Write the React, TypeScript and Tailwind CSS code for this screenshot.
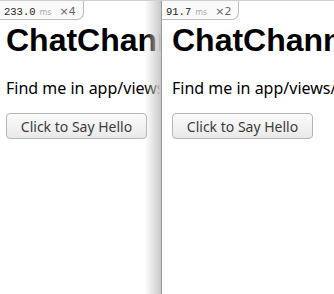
import React from "react";

function Badge({ ms, count }: { ms: string; count: string }) {
  return (
    <div className="flex h-[19px] items-end self-start rounded-br-[7px] border-b border-r border-[#bdbdbd] bg-[#fafafa] pb-[2px] pl-[4px] pr-[7px]">
      <span className="text-[10.5px] leading-none text-[#222]" style={{ fontFamily: '"Liberation Mono", monospace' }}>
        {ms}
      </span>
      <span className="ml-[4px] text-[8px] leading-none text-[#aaa]" style={{ fontFamily: '"DejaVu Sans", sans-serif' }}>
        ms
      </span>
      <span className="ml-[8px] text-[11px] leading-none text-[#666]" style={{ fontFamily: '"DejaVu Sans", sans-serif' }}>
        ×{count}
      </span>
    </div>
  );
}

function Panel({ ms, count, pad }: { ms: string; count: string; pad: string }) {
  return (
    <div className="flex min-w-0 flex-col">
      <Badge ms={ms} count={count} />
      <div className={pad}>
        <h1
          className="mt-[4px] whitespace-nowrap text-[32px] font-bold leading-[32px] text-black"
          style={{ fontFamily: '"Liberation Sans", Arial, sans-serif' }}
        >
          ChatChannel
        </h1>
        <p
          className="mt-[22px] whitespace-nowrap text-[16px] leading-[20px] text-black"
          style={{ fontFamily: '"Noto Sans", sans-serif' }}
        >
          Find me in app/views/chat
        </p>
        <button
          className="mt-[15px] flex h-[26px] w-[141px] items-center justify-center rounded-[4px] border border-[#b5b5b5] bg-gradient-to-b from-[#fbfbfb] to-[#e9e9e9] text-[14px] text-[#3c3c3c]"
          style={{ fontFamily: '"Noto Sans", sans-serif' }}
        >
          Click to Say Hello
        </button>
      </div>
    </div>
  );
}

export default function App() {
  return (
    <div className="flex h-[294px] w-[334px] overflow-hidden border-t border-[#cfcfcf] bg-white">
      <div className="relative w-[161px] shrink-0 overflow-hidden">
        <Panel ms="233.0" count="4" pad="pl-[6px]" />
        <div className="absolute inset-y-0 right-0 w-[16px] bg-gradient-to-r from-[#ffffff00] to-[#c9c9c9]" />
      </div>
      <div className="w-px shrink-0 bg-[#9a9a9a]" />
      <div className="min-w-0 flex-1 overflow-hidden">
        <Panel ms="91.7" count="2" pad="pl-[10px]" />
      </div>
    </div>
  );
}
